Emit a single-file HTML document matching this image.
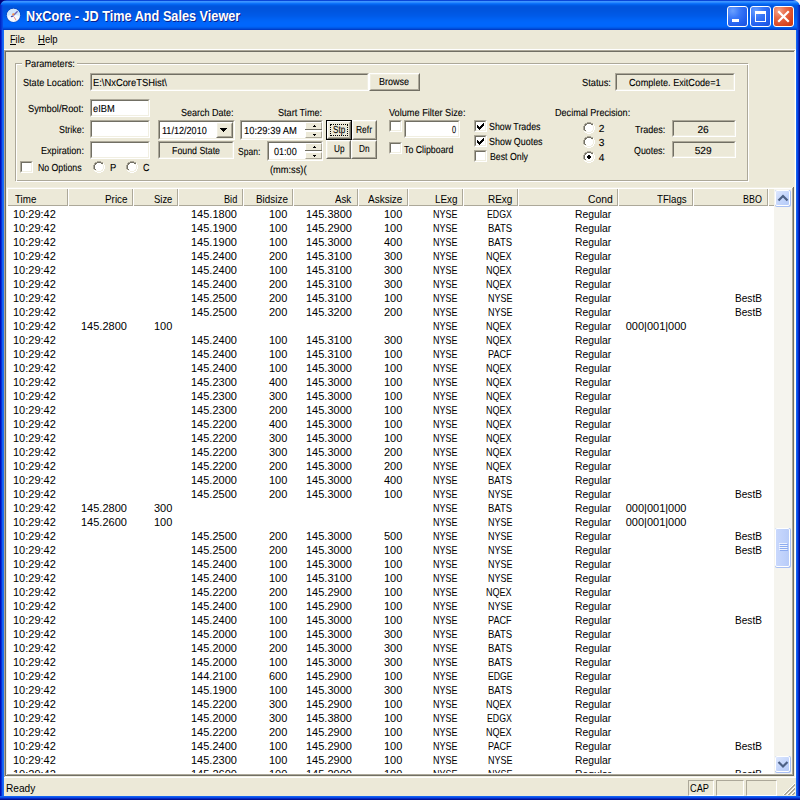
<!DOCTYPE html>
<html><head><meta charset="utf-8"><style>
html,body{margin:0;padding:0;width:800px;height:800px;overflow:hidden;background:#fff}
div{position:absolute;box-sizing:border-box}
.t{white-space:pre;font:11px/13px "Liberation Sans",sans-serif;color:#000;transform-origin:0 0}
.d{font-size:10.2px;text-rendering:geometricPrecision;-webkit-text-stroke:0.1px #000}
.tt{font:bold 14px/13px "Liberation Sans",sans-serif;text-shadow:1px 1px 0 #0a1e8c}
</style></head><body>
<div style="left:0;top:0;width:800px;height:800px;background:#0831d9"></div>
<div style="left:0;top:0;width:4px;height:800px;background:linear-gradient(90deg,#0010b8 0,#0010b8 1px,#0a2fd6 1px,#0a2fd6 2px,#1262f2 2px,#1262f2 3px,#1a6cf8 3px)"></div>
<div style="left:796px;top:0;width:4px;height:800px;background:linear-gradient(90deg,#1262f2 0,#1262f2 1px,#0a4ae6 1px,#0a4ae6 2px,#0428c4 2px,#0428c4 3px,#001090 3px)"></div>
<div style="left:0;top:796px;width:800px;height:4px;background:linear-gradient(180deg,#1262f2 0,#1262f2 1px,#0a4ae6 1px,#0a4ae6 2px,#0428c4 2px,#0428c4 3px,#001090 3px)"></div>
<div style="left:0px;top:0px;width:8px;height:8px;background:#00007a;"></div>
<div style="left:792px;top:0px;width:8px;height:8px;background:#f4f4f8;"></div>
<div style="left:0;top:0;width:800px;height:30px;border-radius:7px 7px 0 0;background:linear-gradient(180deg,#0a46d8 0px,#0a46d8 1px,#3d95ff 1px,#3d95ff 2px,#2a88ff 2px,#2a88ff 3px,#0d72fa 3px,#0d72fa 4px,#0364f0 4px,#0364f0 5px,#005ae4 5px,#005ae4 6px,#0055de 6px,#0055de 7px,#0054dd 7px,#0054dd 8px,#0054dd 8px,#0054dd 9px,#0055de 9px,#0055de 10px,#0055df 10px,#0055df 11px,#0056e0 11px,#0056e0 12px,#0057e2 12px,#0057e2 13px,#0058e4 13px,#0058e4 14px,#0059e6 14px,#0059e6 15px,#005ae8 15px,#005ae8 16px,#005cea 16px,#005cea 17px,#005eee 17px,#005eee 18px,#0060f1 18px,#0060f1 19px,#0062f4 19px,#0062f4 20px,#0064f7 20px,#0064f7 21px,#0065f9 21px,#0065f9 22px,#0066fb 22px,#0066fb 23px,#0066fc 23px,#0066fc 24px,#0066fc 24px,#0066fc 25px,#0066fc 25px,#0066fc 26px,#0064f8 26px,#0064f8 27px,#005cec 27px,#005cec 28px,#004fdc 28px,#004fdc 29px,#003dc8 29px,#003dc8 30px)"></div>
<div style="left:0;top:5px;width:3px;height:25px;background:linear-gradient(90deg,#0020c0,#0a50e8)"></div>
<div style="left:797px;top:5px;width:3px;height:25px;background:linear-gradient(90deg,#0a50e8,#0020b0)"></div>
<svg style="position:absolute;left:5px;top:7px" width="17" height="17" viewBox="0 0 17 17">
<circle cx="8.5" cy="8.3" r="7.2" fill="#1a3c9a" opacity="0.55"/>
<circle cx="8.5" cy="8.3" r="6.6" fill="#f4f9ff"/>
<path d="M1.9 8.3A6.6 6.6 0 0 1 15.1 8.3L15 9.2C12 7.5 5 7.5 2 9.2Z" fill="#cfe6fb"/>
<path d="M8.6 8.2L12.6 4.2" stroke="#6a64b8" stroke-width="1.3"/>
<path d="M8.6 8.9L5.9 9.6" stroke="#4646a8" stroke-width="1.4"/>
<path d="M9.3 10.2L11.1 13.4" stroke="#f29090" stroke-width="1"/>
<circle cx="8.3" cy="7.4" r="1.1" fill="#ff8a3a"/>
</svg>
<div class="t tt" style="left:25.60px;top:10px;transform:scaleX(0.907);color:#fff;">NxCore - JD Time And Sales Viewer</div>
<div style="left:727px;top:6px;width:21px;height:21px;border:1px solid #fff;border-radius:3px;background:radial-gradient(circle at 25% 20%,#6aa0ff 0,#3a78f8 35%,#2260ee 70%,#1a50dc 100%)"></div>
<div style="left:750px;top:6px;width:21px;height:21px;border:1px solid #fff;border-radius:3px;background:radial-gradient(circle at 25% 20%,#6aa0ff 0,#3a78f8 35%,#2260ee 70%,#1a50dc 100%)"></div>
<div style="left:773px;top:6px;width:21px;height:21px;border:1px solid #fff;border-radius:3px;background:radial-gradient(circle at 25% 20%,#f5a48a 0,#e86a48 35%,#d9441e 75%,#c83a10 100%)"></div>
<div style="left:732px;top:19px;width:7px;height:3px;background:#fff;"></div>
<div style="left:755px;top:11px;width:11px;height:11px;border:1px solid #fff;border-top-width:3px"></div>
<svg style="position:absolute;left:773px;top:6px" width="21" height="21"><path d="M6 6L15 15M15 6L6 15" stroke="#fff" stroke-width="2.2" stroke-linecap="square"/></svg>
<div style="left:4px;top:30px;width:792px;height:766px;background:#ece9d8;"></div>
<div class="t" style="left:10.00px;top:33px;transform:scaleX(0.833);">File</div>
<div style="left:10px;top:44px;width:6px;height:1px;background:#000;"></div>
<div class="t" style="left:38.00px;top:33px;transform:scaleX(0.870);">Help</div>
<div style="left:38px;top:44px;width:7px;height:1px;background:#000;"></div>
<div style="left:4px;top:49px;width:792px;height:1px;background:#ffffff;"></div>
<div style="left:4px;top:50px;width:791px;height:1px;background:#aca899;"></div>
<div style="left:4px;top:50px;width:1px;height:727px;background:#aca899;"></div>
<div style="left:5px;top:51px;width:789px;height:1px;background:#716f64;"></div>
<div style="left:5px;top:51px;width:1px;height:725px;background:#716f64;"></div>
<div style="left:795px;top:50px;width:1px;height:728px;background:#ffffff;"></div>
<div style="left:4px;top:777px;width:792px;height:1px;background:#ffffff;"></div>
<div style="left:794px;top:51px;width:1px;height:726px;background:#f1efe2;"></div>
<div style="left:5px;top:776px;width:790px;height:1px;background:#f1efe2;"></div>
<div style="left:15px;top:63px;width:733px;height:1px;background:#aca899;"></div>
<div style="left:15px;top:63px;width:1px;height:118px;background:#aca899;"></div>
<div style="left:747px;top:63px;width:1px;height:118px;background:#aca899;"></div>
<div style="left:15px;top:180px;width:733px;height:1px;background:#aca899;"></div>
<div style="left:16px;top:64px;width:733px;height:1px;background:#ffffff;"></div>
<div style="left:16px;top:64px;width:1px;height:118px;background:#ffffff;"></div>
<div style="left:748px;top:64px;width:1px;height:118px;background:#ffffff;"></div>
<div style="left:16px;top:181px;width:733px;height:1px;background:#ffffff;"></div>
<div style="left:22px;top:62px;width:55px;height:4px;background:#ece9d8;"></div>
<div class="t d" style="left:25.00px;top:58px;transform:scaleX(0.899);">Parameters:</div>
<div class="t d" style="left:22.50px;top:77px;transform:scaleX(0.894);">State Location:</div>
<div style="left:90px;top:73px;width:279px;height:18px;background:#ece9d8;box-sizing:border-box;border-top:1px solid #aca899;border-left:1px solid #aca899;border-bottom:1px solid #ffffff;border-right:1px solid #ffffff"><div style="left:0;top:0;right:0;bottom:0;border-top:1px solid #716f64;border-left:1px solid #716f64;border-bottom:1px solid #f1efe2;border-right:1px solid #f1efe2"></div></div>
<div class="t d" style="left:93.00px;top:77px;transform:scaleX(0.919);">E:\NxCoreTSHist\</div>
<div style="left:369px;top:73px;width:51px;height:18px;background:#ece9d8;box-sizing:border-box;border-top:1px solid #ffffff;border-left:1px solid #ffffff;border-bottom:1px solid #716f64;border-right:1px solid #716f64"><div style="left:0;top:0;right:0;bottom:0;border-top:1px solid #f1efe2;border-left:1px solid #f1efe2;border-bottom:1px solid #aca899;border-right:1px solid #aca899"></div></div>
<div class="t d" style="left:378.85px;top:76px;transform:scaleX(0.883);">Browse</div>
<div class="t d" style="left:581.70px;top:77px;transform:scaleX(0.910);">Status:</div>
<div style="left:615px;top:73px;width:120px;height:18px;background:#ece9d8;box-sizing:border-box;border-top:1px solid #aca899;border-left:1px solid #aca899;border-bottom:1px solid #ffffff;border-right:1px solid #ffffff"><div style="left:0;top:0;right:0;bottom:0;border-top:1px solid #716f64;border-left:1px solid #716f64;border-bottom:1px solid #f1efe2;border-right:1px solid #f1efe2"></div></div>
<div class="t d" style="left:628.80px;top:77px;transform:scaleX(0.896);">Complete. ExitCode=1</div>
<div class="t d" style="left:27.80px;top:103px;transform:scaleX(0.910);">Symbol/Root:</div>
<div style="left:90px;top:99px;width:60px;height:18px;background:#ffffff;box-sizing:border-box;border-top:1px solid #aca899;border-left:1px solid #aca899;border-bottom:1px solid #ffffff;border-right:1px solid #ffffff"><div style="left:0;top:0;right:0;bottom:0;border-top:1px solid #716f64;border-left:1px solid #716f64;border-bottom:1px solid #f1efe2;border-right:1px solid #f1efe2"></div></div>
<div class="t d" style="left:93.00px;top:103px;transform:scaleX(0.913);">eIBM</div>
<div class="t d" style="left:58.50px;top:124px;transform:scaleX(0.870);">Strike:</div>
<div style="left:90px;top:120px;width:60px;height:18px;background:#ffffff;box-sizing:border-box;border-top:1px solid #aca899;border-left:1px solid #aca899;border-bottom:1px solid #ffffff;border-right:1px solid #ffffff"><div style="left:0;top:0;right:0;bottom:0;border-top:1px solid #716f64;border-left:1px solid #716f64;border-bottom:1px solid #f1efe2;border-right:1px solid #f1efe2"></div></div>
<div class="t d" style="left:40.50px;top:145px;transform:scaleX(0.892);">Expiration:</div>
<div style="left:90px;top:141px;width:60px;height:18px;background:#ffffff;box-sizing:border-box;border-top:1px solid #aca899;border-left:1px solid #aca899;border-bottom:1px solid #ffffff;border-right:1px solid #ffffff"><div style="left:0;top:0;right:0;bottom:0;border-top:1px solid #716f64;border-left:1px solid #716f64;border-bottom:1px solid #f1efe2;border-right:1px solid #f1efe2"></div></div>
<div style="left:20px;top:161px;width:13px;height:12px;background:#ffffff;box-sizing:border-box;border-top:1px solid #aca899;border-left:1px solid #aca899;border-bottom:1px solid #ffffff;border-right:1px solid #ffffff"><div style="left:0;top:0;right:0;bottom:0;border-top:1px solid #716f64;border-left:1px solid #716f64;border-bottom:1px solid #f1efe2;border-right:1px solid #f1efe2"></div></div>
<div class="t d" style="left:38.00px;top:162px;transform:scaleX(0.855);">No Options</div>
<svg style="position:absolute;left:93px;top:161px" width="12" height="12" shape-rendering="crispEdges"><path fill="#aca899" d="M4 0h1v1h-1zM5 0h1v1h-1zM6 0h1v1h-1zM7 0h1v1h-1zM2 1h1v1h-1zM3 1h1v1h-1zM8 1h1v1h-1zM9 1h1v1h-1zM1 2h1v1h-1zM1 3h1v1h-1zM0 4h1v1h-1zM0 5h1v1h-1zM0 6h1v1h-1zM0 7h1v1h-1zM1 8h1v1h-1z"/><path fill="#716f64" d="M4 1h1v1h-1zM5 1h1v1h-1zM6 1h1v1h-1zM7 1h1v1h-1zM2 2h1v1h-1zM3 2h1v1h-1zM8 2h1v1h-1zM9 2h1v1h-1zM2 3h1v1h-1zM1 4h1v1h-1zM1 5h1v1h-1zM1 6h1v1h-1zM1 7h1v1h-1zM2 8h1v1h-1z"/><path fill="#ffffff" d="M4 2h1v1h-1zM5 2h1v1h-1zM6 2h1v1h-1zM7 2h1v1h-1zM10 2h1v1h-1zM3 3h1v1h-1zM4 3h1v1h-1zM5 3h1v1h-1zM6 3h1v1h-1zM7 3h1v1h-1zM8 3h1v1h-1zM10 3h1v1h-1zM2 4h1v1h-1zM3 4h1v1h-1zM4 4h1v1h-1zM5 4h1v1h-1zM6 4h1v1h-1zM7 4h1v1h-1zM8 4h1v1h-1zM9 4h1v1h-1zM11 4h1v1h-1zM2 5h1v1h-1zM3 5h1v1h-1zM4 5h1v1h-1zM5 5h1v1h-1zM6 5h1v1h-1zM7 5h1v1h-1zM8 5h1v1h-1zM9 5h1v1h-1zM11 5h1v1h-1zM2 6h1v1h-1zM3 6h1v1h-1zM4 6h1v1h-1zM5 6h1v1h-1zM6 6h1v1h-1zM7 6h1v1h-1zM8 6h1v1h-1zM9 6h1v1h-1zM11 6h1v1h-1zM2 7h1v1h-1zM3 7h1v1h-1zM4 7h1v1h-1zM5 7h1v1h-1zM6 7h1v1h-1zM7 7h1v1h-1zM8 7h1v1h-1zM9 7h1v1h-1zM11 7h1v1h-1zM3 8h1v1h-1zM4 8h1v1h-1zM5 8h1v1h-1zM6 8h1v1h-1zM7 8h1v1h-1zM8 8h1v1h-1zM10 8h1v1h-1zM1 9h1v1h-1zM4 9h1v1h-1zM5 9h1v1h-1zM6 9h1v1h-1zM7 9h1v1h-1zM10 9h1v1h-1zM2 10h1v1h-1zM3 10h1v1h-1zM8 10h1v1h-1zM9 10h1v1h-1zM4 11h1v1h-1zM5 11h1v1h-1zM6 11h1v1h-1zM7 11h1v1h-1z"/><path fill="#f1efe2" d="M9 3h1v1h-1zM10 4h1v1h-1zM10 5h1v1h-1zM10 6h1v1h-1zM10 7h1v1h-1zM9 8h1v1h-1zM2 9h1v1h-1zM3 9h1v1h-1zM8 9h1v1h-1zM9 9h1v1h-1zM4 10h1v1h-1zM5 10h1v1h-1zM6 10h1v1h-1zM7 10h1v1h-1z"/></svg>
<div class="t d" style="left:109.50px;top:162px;transform:scaleX(0.924);">P</div>
<svg style="position:absolute;left:126px;top:161px" width="12" height="12" shape-rendering="crispEdges"><path fill="#aca899" d="M4 0h1v1h-1zM5 0h1v1h-1zM6 0h1v1h-1zM7 0h1v1h-1zM2 1h1v1h-1zM3 1h1v1h-1zM8 1h1v1h-1zM9 1h1v1h-1zM1 2h1v1h-1zM1 3h1v1h-1zM0 4h1v1h-1zM0 5h1v1h-1zM0 6h1v1h-1zM0 7h1v1h-1zM1 8h1v1h-1z"/><path fill="#716f64" d="M4 1h1v1h-1zM5 1h1v1h-1zM6 1h1v1h-1zM7 1h1v1h-1zM2 2h1v1h-1zM3 2h1v1h-1zM8 2h1v1h-1zM9 2h1v1h-1zM2 3h1v1h-1zM1 4h1v1h-1zM1 5h1v1h-1zM1 6h1v1h-1zM1 7h1v1h-1zM2 8h1v1h-1z"/><path fill="#ffffff" d="M4 2h1v1h-1zM5 2h1v1h-1zM6 2h1v1h-1zM7 2h1v1h-1zM10 2h1v1h-1zM3 3h1v1h-1zM4 3h1v1h-1zM5 3h1v1h-1zM6 3h1v1h-1zM7 3h1v1h-1zM8 3h1v1h-1zM10 3h1v1h-1zM2 4h1v1h-1zM3 4h1v1h-1zM4 4h1v1h-1zM5 4h1v1h-1zM6 4h1v1h-1zM7 4h1v1h-1zM8 4h1v1h-1zM9 4h1v1h-1zM11 4h1v1h-1zM2 5h1v1h-1zM3 5h1v1h-1zM4 5h1v1h-1zM5 5h1v1h-1zM6 5h1v1h-1zM7 5h1v1h-1zM8 5h1v1h-1zM9 5h1v1h-1zM11 5h1v1h-1zM2 6h1v1h-1zM3 6h1v1h-1zM4 6h1v1h-1zM5 6h1v1h-1zM6 6h1v1h-1zM7 6h1v1h-1zM8 6h1v1h-1zM9 6h1v1h-1zM11 6h1v1h-1zM2 7h1v1h-1zM3 7h1v1h-1zM4 7h1v1h-1zM5 7h1v1h-1zM6 7h1v1h-1zM7 7h1v1h-1zM8 7h1v1h-1zM9 7h1v1h-1zM11 7h1v1h-1zM3 8h1v1h-1zM4 8h1v1h-1zM5 8h1v1h-1zM6 8h1v1h-1zM7 8h1v1h-1zM8 8h1v1h-1zM10 8h1v1h-1zM1 9h1v1h-1zM4 9h1v1h-1zM5 9h1v1h-1zM6 9h1v1h-1zM7 9h1v1h-1zM10 9h1v1h-1zM2 10h1v1h-1zM3 10h1v1h-1zM8 10h1v1h-1zM9 10h1v1h-1zM4 11h1v1h-1zM5 11h1v1h-1zM6 11h1v1h-1zM7 11h1v1h-1z"/><path fill="#f1efe2" d="M9 3h1v1h-1zM10 4h1v1h-1zM10 5h1v1h-1zM10 6h1v1h-1zM10 7h1v1h-1zM9 8h1v1h-1zM2 9h1v1h-1zM3 9h1v1h-1zM8 9h1v1h-1zM9 9h1v1h-1zM4 10h1v1h-1zM5 10h1v1h-1zM6 10h1v1h-1zM7 10h1v1h-1z"/></svg>
<div class="t d" style="left:143.00px;top:162px;transform:scaleX(0.876);">C</div>
<div class="t d" style="left:180.50px;top:107px;transform:scaleX(0.885);">Search Date:</div>
<div style="left:158px;top:120px;width:77px;height:20px;background:#ffffff;box-sizing:border-box;border-top:1px solid #aca899;border-left:1px solid #aca899;border-bottom:1px solid #ffffff;border-right:1px solid #ffffff"><div style="left:0;top:0;right:0;bottom:0;border-top:1px solid #716f64;border-left:1px solid #716f64;border-bottom:1px solid #f1efe2;border-right:1px solid #f1efe2"></div></div>
<div class="t d" style="left:162.30px;top:125px;transform:scaleX(0.891);">11/12/2010</div>
<div style="left:216px;top:122px;width:17px;height:16px;background:#ece9d8;box-sizing:border-box;border-top:1px solid #ffffff;border-left:1px solid #ffffff;border-bottom:1px solid #716f64;border-right:1px solid #716f64"><div style="left:0;top:0;right:0;bottom:0;border-top:1px solid #f1efe2;border-left:1px solid #f1efe2;border-bottom:1px solid #aca899;border-right:1px solid #aca899"></div></div>
<svg style="position:absolute;left:220px;top:128px" width="7" height="4" shape-rendering="crispEdges"><path d="M0 0h7v1h-1v1h-1v1h-1v1h-1v-1h-1v-1h-1v-1h-1z" fill="#000"/></svg>
<div style="left:158px;top:141px;width:76px;height:18px;background:#ece9d8;box-sizing:border-box;border-top:1px solid #aca899;border-left:1px solid #aca899;border-bottom:1px solid #ffffff;border-right:1px solid #ffffff"><div style="left:0;top:0;right:0;bottom:0;border-top:1px solid #716f64;border-left:1px solid #716f64;border-bottom:1px solid #f1efe2;border-right:1px solid #f1efe2"></div></div>
<div class="t d" style="left:171.95px;top:145px;transform:scaleX(0.865);">Found State</div>
<div class="t d" style="left:277.50px;top:107px;transform:scaleX(0.895);">Start Time:</div>
<div style="left:240px;top:120px;width:83px;height:20px;background:#ffffff;box-sizing:border-box;border-top:1px solid #aca899;border-left:1px solid #aca899;border-bottom:1px solid #ffffff;border-right:1px solid #ffffff"><div style="left:0;top:0;right:0;bottom:0;border-top:1px solid #716f64;border-left:1px solid #716f64;border-bottom:1px solid #f1efe2;border-right:1px solid #f1efe2"></div></div>
<div class="t d" style="left:244.40px;top:125px;transform:scaleX(0.924);">10:29:39 AM</div>
<div style="left:305px;top:122px;width:17px;height:8px;background:#ece9d8;border-top:1px solid #ffffff;border-left:1px solid #ffffff;border-bottom:1px solid #aca899;border-right:1px solid #aca899"></div>
<div style="left:305px;top:131px;width:17px;height:7px;background:#ece9d8;border-top:1px solid #ffffff;border-left:1px solid #ffffff;border-bottom:1px solid #aca899;border-right:1px solid #aca899"></div>
<div style="left:305px;top:129px;width:17px;height:1px;background:#716f64;"></div>
<svg style="position:absolute;left:313px;top:125px" width="3" height="2" shape-rendering="crispEdges"><path d="M1 0h1v1h1v1h-3v-1h1z" fill="#000"/></svg>
<svg style="position:absolute;left:313px;top:134px" width="3" height="2" shape-rendering="crispEdges"><path d="M0 0h3v1h-1v1h-1v-1h-1z" fill="#000"/></svg>
<div class="t d" style="left:237.50px;top:146px;transform:scaleX(0.837);">Span:</div>
<div style="left:267px;top:141px;width:56px;height:20px;background:#ffffff;box-sizing:border-box;border-top:1px solid #aca899;border-left:1px solid #aca899;border-bottom:1px solid #ffffff;border-right:1px solid #ffffff"><div style="left:0;top:0;right:0;bottom:0;border-top:1px solid #716f64;border-left:1px solid #716f64;border-bottom:1px solid #f1efe2;border-right:1px solid #f1efe2"></div></div>
<div class="t d" style="left:274.40px;top:146px;transform:scaleX(0.890);">01:00</div>
<div style="left:305px;top:143px;width:17px;height:8px;background:#ece9d8;border-top:1px solid #ffffff;border-left:1px solid #ffffff;border-bottom:1px solid #aca899;border-right:1px solid #aca899"></div>
<div style="left:305px;top:152px;width:17px;height:7px;background:#ece9d8;border-top:1px solid #ffffff;border-left:1px solid #ffffff;border-bottom:1px solid #aca899;border-right:1px solid #aca899"></div>
<div style="left:305px;top:150px;width:17px;height:1px;background:#716f64;"></div>
<svg style="position:absolute;left:313px;top:146px" width="3" height="2" shape-rendering="crispEdges"><path d="M1 0h1v1h1v1h-3v-1h1z" fill="#000"/></svg>
<svg style="position:absolute;left:313px;top:155px" width="3" height="2" shape-rendering="crispEdges"><path d="M0 0h3v1h-1v1h-1v-1h-1z" fill="#000"/></svg>
<div class="t d" style="left:269.80px;top:164px;transform:scaleX(0.909);">(mm:ss)(</div>
<div style="left:352px;top:120px;width:25px;height:20px;background:#ece9d8;box-sizing:border-box;border-top:1px solid #ffffff;border-left:1px solid #ffffff;border-bottom:1px solid #716f64;border-right:1px solid #716f64"><div style="left:0;top:0;right:0;bottom:0;border-top:1px solid #f1efe2;border-left:1px solid #f1efe2;border-bottom:1px solid #aca899;border-right:1px solid #aca899"></div></div>
<div class="t d" style="left:355.90px;top:124px;transform:scaleX(0.832);">Refr</div>
<div style="left:326px;top:140px;width:25px;height:19px;background:#ece9d8;box-sizing:border-box;border-top:1px solid #ffffff;border-left:1px solid #ffffff;border-bottom:1px solid #716f64;border-right:1px solid #716f64"><div style="left:0;top:0;right:0;bottom:0;border-top:1px solid #f1efe2;border-left:1px solid #f1efe2;border-bottom:1px solid #aca899;border-right:1px solid #aca899"></div></div>
<div class="t d" style="left:333.55px;top:143px;transform:scaleX(0.809);">Up</div>
<div style="left:351px;top:140px;width:26px;height:19px;background:#ece9d8;box-sizing:border-box;border-top:1px solid #ffffff;border-left:1px solid #ffffff;border-bottom:1px solid #716f64;border-right:1px solid #716f64"><div style="left:0;top:0;right:0;bottom:0;border-top:1px solid #f1efe2;border-left:1px solid #f1efe2;border-bottom:1px solid #aca899;border-right:1px solid #aca899"></div></div>
<div class="t d" style="left:358.55px;top:143px;transform:scaleX(0.809);">Dn</div>
<div style="left:326px;top:120px;width:26px;height:20px;border:1px solid #000"></div>
<div style="left:327px;top:121px;width:24px;height:18px;background:#ece9d8;box-sizing:border-box;border-top:1px solid #ffffff;border-left:1px solid #ffffff;border-bottom:1px solid #716f64;border-right:1px solid #716f64"><div style="left:0;top:0;right:0;bottom:0;border-top:1px solid #f1efe2;border-left:1px solid #f1efe2;border-bottom:1px solid #aca899;border-right:1px solid #aca899"></div></div>
<div style="left:330px;top:124px;width:18px;height:12px;border:1px dotted #000"></div>
<div class="t d" style="left:332.55px;top:124px;transform:scaleX(0.793);">Stp</div>
<div class="t d" style="left:389.40px;top:107px;transform:scaleX(0.901);">Volume Filter Size:</div>
<div style="left:389px;top:120px;width:13px;height:12px;background:#ffffff;box-sizing:border-box;border-top:1px solid #aca899;border-left:1px solid #aca899;border-bottom:1px solid #ffffff;border-right:1px solid #ffffff"><div style="left:0;top:0;right:0;bottom:0;border-top:1px solid #716f64;border-left:1px solid #716f64;border-bottom:1px solid #f1efe2;border-right:1px solid #f1efe2"></div></div>
<div style="left:404px;top:120px;width:56px;height:18px;background:#ffffff;box-sizing:border-box;border-top:1px solid #aca899;border-left:1px solid #aca899;border-bottom:1px solid #ffffff;border-right:1px solid #ffffff"><div style="left:0;top:0;right:0;bottom:0;border-top:1px solid #716f64;border-left:1px solid #716f64;border-bottom:1px solid #f1efe2;border-right:1px solid #f1efe2"></div></div>
<div class="t d" style="left:452.00px;top:124px;transform:scaleX(0.719);">0</div>
<div style="left:389px;top:142px;width:13px;height:12px;background:#ffffff;box-sizing:border-box;border-top:1px solid #aca899;border-left:1px solid #aca899;border-bottom:1px solid #ffffff;border-right:1px solid #ffffff"><div style="left:0;top:0;right:0;bottom:0;border-top:1px solid #716f64;border-left:1px solid #716f64;border-bottom:1px solid #f1efe2;border-right:1px solid #f1efe2"></div></div>
<div class="t d" style="left:404.40px;top:144px;transform:scaleX(0.863);">To Clipboard</div>
<div style="left:474px;top:120px;width:13px;height:12px;background:#ffffff;box-sizing:border-box;border-top:1px solid #aca899;border-left:1px solid #aca899;border-bottom:1px solid #ffffff;border-right:1px solid #ffffff"><div style="left:0;top:0;right:0;bottom:0;border-top:1px solid #716f64;border-left:1px solid #716f64;border-bottom:1px solid #f1efe2;border-right:1px solid #f1efe2"></div></div>
<svg style="position:absolute;left:474px;top:120px" width="13" height="12" shape-rendering="crispEdges"><path fill="#000" d="M9 3h1v1h-1zM8 4h1v1h-1zM9 4h1v1h-1zM3 5h1v1h-1zM7 5h1v1h-1zM8 5h1v1h-1zM9 5h1v1h-1zM3 6h1v1h-1zM4 6h1v1h-1zM6 6h1v1h-1zM7 6h1v1h-1zM8 6h1v1h-1zM3 7h1v1h-1zM4 7h1v1h-1zM5 7h1v1h-1zM6 7h1v1h-1zM7 7h1v1h-1zM4 8h1v1h-1zM5 8h1v1h-1zM6 8h1v1h-1zM5 9h1v1h-1z"/></svg>
<div class="t d" style="left:488.80px;top:121px;transform:scaleX(0.866);">Show Trades</div>
<div style="left:474px;top:135px;width:13px;height:12px;background:#ffffff;box-sizing:border-box;border-top:1px solid #aca899;border-left:1px solid #aca899;border-bottom:1px solid #ffffff;border-right:1px solid #ffffff"><div style="left:0;top:0;right:0;bottom:0;border-top:1px solid #716f64;border-left:1px solid #716f64;border-bottom:1px solid #f1efe2;border-right:1px solid #f1efe2"></div></div>
<svg style="position:absolute;left:474px;top:135px" width="13" height="12" shape-rendering="crispEdges"><path fill="#000" d="M9 3h1v1h-1zM8 4h1v1h-1zM9 4h1v1h-1zM3 5h1v1h-1zM7 5h1v1h-1zM8 5h1v1h-1zM9 5h1v1h-1zM3 6h1v1h-1zM4 6h1v1h-1zM6 6h1v1h-1zM7 6h1v1h-1zM8 6h1v1h-1zM3 7h1v1h-1zM4 7h1v1h-1zM5 7h1v1h-1zM6 7h1v1h-1zM7 7h1v1h-1zM4 8h1v1h-1zM5 8h1v1h-1zM6 8h1v1h-1zM5 9h1v1h-1z"/></svg>
<div class="t d" style="left:488.80px;top:136px;transform:scaleX(0.876);">Show Quotes</div>
<div style="left:474px;top:150px;width:13px;height:12px;background:#ffffff;box-sizing:border-box;border-top:1px solid #aca899;border-left:1px solid #aca899;border-bottom:1px solid #ffffff;border-right:1px solid #ffffff"><div style="left:0;top:0;right:0;bottom:0;border-top:1px solid #716f64;border-left:1px solid #716f64;border-bottom:1px solid #f1efe2;border-right:1px solid #f1efe2"></div></div>
<div class="t d" style="left:489.80px;top:151px;transform:scaleX(0.860);">Best Only</div>
<div class="t d" style="left:554.80px;top:107px;transform:scaleX(0.891);">Decimal Precision:</div>
<svg style="position:absolute;left:583px;top:122px" width="12" height="12" shape-rendering="crispEdges"><path fill="#aca899" d="M4 0h1v1h-1zM5 0h1v1h-1zM6 0h1v1h-1zM7 0h1v1h-1zM2 1h1v1h-1zM3 1h1v1h-1zM8 1h1v1h-1zM9 1h1v1h-1zM1 2h1v1h-1zM1 3h1v1h-1zM0 4h1v1h-1zM0 5h1v1h-1zM0 6h1v1h-1zM0 7h1v1h-1zM1 8h1v1h-1z"/><path fill="#716f64" d="M4 1h1v1h-1zM5 1h1v1h-1zM6 1h1v1h-1zM7 1h1v1h-1zM2 2h1v1h-1zM3 2h1v1h-1zM8 2h1v1h-1zM9 2h1v1h-1zM2 3h1v1h-1zM1 4h1v1h-1zM1 5h1v1h-1zM1 6h1v1h-1zM1 7h1v1h-1zM2 8h1v1h-1z"/><path fill="#ffffff" d="M4 2h1v1h-1zM5 2h1v1h-1zM6 2h1v1h-1zM7 2h1v1h-1zM10 2h1v1h-1zM3 3h1v1h-1zM4 3h1v1h-1zM5 3h1v1h-1zM6 3h1v1h-1zM7 3h1v1h-1zM8 3h1v1h-1zM10 3h1v1h-1zM2 4h1v1h-1zM3 4h1v1h-1zM4 4h1v1h-1zM5 4h1v1h-1zM6 4h1v1h-1zM7 4h1v1h-1zM8 4h1v1h-1zM9 4h1v1h-1zM11 4h1v1h-1zM2 5h1v1h-1zM3 5h1v1h-1zM4 5h1v1h-1zM5 5h1v1h-1zM6 5h1v1h-1zM7 5h1v1h-1zM8 5h1v1h-1zM9 5h1v1h-1zM11 5h1v1h-1zM2 6h1v1h-1zM3 6h1v1h-1zM4 6h1v1h-1zM5 6h1v1h-1zM6 6h1v1h-1zM7 6h1v1h-1zM8 6h1v1h-1zM9 6h1v1h-1zM11 6h1v1h-1zM2 7h1v1h-1zM3 7h1v1h-1zM4 7h1v1h-1zM5 7h1v1h-1zM6 7h1v1h-1zM7 7h1v1h-1zM8 7h1v1h-1zM9 7h1v1h-1zM11 7h1v1h-1zM3 8h1v1h-1zM4 8h1v1h-1zM5 8h1v1h-1zM6 8h1v1h-1zM7 8h1v1h-1zM8 8h1v1h-1zM10 8h1v1h-1zM1 9h1v1h-1zM4 9h1v1h-1zM5 9h1v1h-1zM6 9h1v1h-1zM7 9h1v1h-1zM10 9h1v1h-1zM2 10h1v1h-1zM3 10h1v1h-1zM8 10h1v1h-1zM9 10h1v1h-1zM4 11h1v1h-1zM5 11h1v1h-1zM6 11h1v1h-1zM7 11h1v1h-1z"/><path fill="#f1efe2" d="M9 3h1v1h-1zM10 4h1v1h-1zM10 5h1v1h-1zM10 6h1v1h-1zM10 7h1v1h-1zM9 8h1v1h-1zM2 9h1v1h-1zM3 9h1v1h-1zM8 9h1v1h-1zM9 9h1v1h-1zM4 10h1v1h-1zM5 10h1v1h-1zM6 10h1v1h-1zM7 10h1v1h-1z"/></svg>
<div class="t d" style="left:598.80px;top:123px;">2</div>
<svg style="position:absolute;left:583px;top:136px" width="12" height="12" shape-rendering="crispEdges"><path fill="#aca899" d="M4 0h1v1h-1zM5 0h1v1h-1zM6 0h1v1h-1zM7 0h1v1h-1zM2 1h1v1h-1zM3 1h1v1h-1zM8 1h1v1h-1zM9 1h1v1h-1zM1 2h1v1h-1zM1 3h1v1h-1zM0 4h1v1h-1zM0 5h1v1h-1zM0 6h1v1h-1zM0 7h1v1h-1zM1 8h1v1h-1z"/><path fill="#716f64" d="M4 1h1v1h-1zM5 1h1v1h-1zM6 1h1v1h-1zM7 1h1v1h-1zM2 2h1v1h-1zM3 2h1v1h-1zM8 2h1v1h-1zM9 2h1v1h-1zM2 3h1v1h-1zM1 4h1v1h-1zM1 5h1v1h-1zM1 6h1v1h-1zM1 7h1v1h-1zM2 8h1v1h-1z"/><path fill="#ffffff" d="M4 2h1v1h-1zM5 2h1v1h-1zM6 2h1v1h-1zM7 2h1v1h-1zM10 2h1v1h-1zM3 3h1v1h-1zM4 3h1v1h-1zM5 3h1v1h-1zM6 3h1v1h-1zM7 3h1v1h-1zM8 3h1v1h-1zM10 3h1v1h-1zM2 4h1v1h-1zM3 4h1v1h-1zM4 4h1v1h-1zM5 4h1v1h-1zM6 4h1v1h-1zM7 4h1v1h-1zM8 4h1v1h-1zM9 4h1v1h-1zM11 4h1v1h-1zM2 5h1v1h-1zM3 5h1v1h-1zM4 5h1v1h-1zM5 5h1v1h-1zM6 5h1v1h-1zM7 5h1v1h-1zM8 5h1v1h-1zM9 5h1v1h-1zM11 5h1v1h-1zM2 6h1v1h-1zM3 6h1v1h-1zM4 6h1v1h-1zM5 6h1v1h-1zM6 6h1v1h-1zM7 6h1v1h-1zM8 6h1v1h-1zM9 6h1v1h-1zM11 6h1v1h-1zM2 7h1v1h-1zM3 7h1v1h-1zM4 7h1v1h-1zM5 7h1v1h-1zM6 7h1v1h-1zM7 7h1v1h-1zM8 7h1v1h-1zM9 7h1v1h-1zM11 7h1v1h-1zM3 8h1v1h-1zM4 8h1v1h-1zM5 8h1v1h-1zM6 8h1v1h-1zM7 8h1v1h-1zM8 8h1v1h-1zM10 8h1v1h-1zM1 9h1v1h-1zM4 9h1v1h-1zM5 9h1v1h-1zM6 9h1v1h-1zM7 9h1v1h-1zM10 9h1v1h-1zM2 10h1v1h-1zM3 10h1v1h-1zM8 10h1v1h-1zM9 10h1v1h-1zM4 11h1v1h-1zM5 11h1v1h-1zM6 11h1v1h-1zM7 11h1v1h-1z"/><path fill="#f1efe2" d="M9 3h1v1h-1zM10 4h1v1h-1zM10 5h1v1h-1zM10 6h1v1h-1zM10 7h1v1h-1zM9 8h1v1h-1zM2 9h1v1h-1zM3 9h1v1h-1zM8 9h1v1h-1zM9 9h1v1h-1zM4 10h1v1h-1zM5 10h1v1h-1zM6 10h1v1h-1zM7 10h1v1h-1z"/></svg>
<div class="t d" style="left:598.80px;top:137px;">3</div>
<svg style="position:absolute;left:583px;top:151px" width="12" height="12" shape-rendering="crispEdges"><path fill="#aca899" d="M4 0h1v1h-1zM5 0h1v1h-1zM6 0h1v1h-1zM7 0h1v1h-1zM2 1h1v1h-1zM3 1h1v1h-1zM8 1h1v1h-1zM9 1h1v1h-1zM1 2h1v1h-1zM1 3h1v1h-1zM0 4h1v1h-1zM0 5h1v1h-1zM0 6h1v1h-1zM0 7h1v1h-1zM1 8h1v1h-1z"/><path fill="#716f64" d="M4 1h1v1h-1zM5 1h1v1h-1zM6 1h1v1h-1zM7 1h1v1h-1zM2 2h1v1h-1zM3 2h1v1h-1zM8 2h1v1h-1zM9 2h1v1h-1zM2 3h1v1h-1zM1 4h1v1h-1zM1 5h1v1h-1zM1 6h1v1h-1zM1 7h1v1h-1zM2 8h1v1h-1z"/><path fill="#ffffff" d="M4 2h1v1h-1zM5 2h1v1h-1zM6 2h1v1h-1zM7 2h1v1h-1zM10 2h1v1h-1zM3 3h1v1h-1zM4 3h1v1h-1zM5 3h1v1h-1zM6 3h1v1h-1zM7 3h1v1h-1zM8 3h1v1h-1zM10 3h1v1h-1zM2 4h1v1h-1zM3 4h1v1h-1zM4 4h1v1h-1zM5 4h1v1h-1zM6 4h1v1h-1zM7 4h1v1h-1zM8 4h1v1h-1zM9 4h1v1h-1zM11 4h1v1h-1zM2 5h1v1h-1zM3 5h1v1h-1zM4 5h1v1h-1zM5 5h1v1h-1zM6 5h1v1h-1zM7 5h1v1h-1zM8 5h1v1h-1zM9 5h1v1h-1zM11 5h1v1h-1zM2 6h1v1h-1zM3 6h1v1h-1zM4 6h1v1h-1zM5 6h1v1h-1zM6 6h1v1h-1zM7 6h1v1h-1zM8 6h1v1h-1zM9 6h1v1h-1zM11 6h1v1h-1zM2 7h1v1h-1zM3 7h1v1h-1zM4 7h1v1h-1zM5 7h1v1h-1zM6 7h1v1h-1zM7 7h1v1h-1zM8 7h1v1h-1zM9 7h1v1h-1zM11 7h1v1h-1zM3 8h1v1h-1zM4 8h1v1h-1zM5 8h1v1h-1zM6 8h1v1h-1zM7 8h1v1h-1zM8 8h1v1h-1zM10 8h1v1h-1zM1 9h1v1h-1zM4 9h1v1h-1zM5 9h1v1h-1zM6 9h1v1h-1zM7 9h1v1h-1zM10 9h1v1h-1zM2 10h1v1h-1zM3 10h1v1h-1zM8 10h1v1h-1zM9 10h1v1h-1zM4 11h1v1h-1zM5 11h1v1h-1zM6 11h1v1h-1zM7 11h1v1h-1z"/><path fill="#f1efe2" d="M9 3h1v1h-1zM10 4h1v1h-1zM10 5h1v1h-1zM10 6h1v1h-1zM10 7h1v1h-1zM9 8h1v1h-1zM2 9h1v1h-1zM3 9h1v1h-1zM8 9h1v1h-1zM9 9h1v1h-1zM4 10h1v1h-1zM5 10h1v1h-1zM6 10h1v1h-1zM7 10h1v1h-1z"/><path fill="#000" d="M5 4h1v1h-1zM6 4h1v1h-1zM4 5h1v1h-1zM5 5h1v1h-1zM6 5h1v1h-1zM7 5h1v1h-1zM4 6h1v1h-1zM5 6h1v1h-1zM6 6h1v1h-1zM7 6h1v1h-1zM5 7h1v1h-1zM6 7h1v1h-1z"/></svg>
<div class="t d" style="left:598.80px;top:152px;">4</div>
<div class="t d" style="left:634.80px;top:124px;transform:scaleX(0.886);">Trades:</div>
<div style="left:672px;top:120px;width:64px;height:17px;background:#ece9d8;box-sizing:border-box;border-top:1px solid #aca899;border-left:1px solid #aca899;border-bottom:1px solid #ffffff;border-right:1px solid #ffffff"><div style="left:0;top:0;right:0;bottom:0;border-top:1px solid #716f64;border-left:1px solid #716f64;border-bottom:1px solid #f1efe2;border-right:1px solid #f1efe2"></div></div>
<div class="t d" style="left:697.44px;top:124px;">26</div>
<div class="t d" style="left:633.80px;top:145px;transform:scaleX(0.868);">Quotes:</div>
<div style="left:672px;top:141px;width:64px;height:17px;background:#ece9d8;box-sizing:border-box;border-top:1px solid #aca899;border-left:1px solid #aca899;border-bottom:1px solid #ffffff;border-right:1px solid #ffffff"><div style="left:0;top:0;right:0;bottom:0;border-top:1px solid #716f64;border-left:1px solid #716f64;border-bottom:1px solid #f1efe2;border-right:1px solid #f1efe2"></div></div>
<div class="t d" style="left:694.65px;top:145px;">529</div>
<div style="left:6px;top:187px;width:788px;height:1px;background:#f1efe2;"></div>
<div style="left:6px;top:187px;width:1px;height:589px;background:#f1efe2;"></div>
<div style="left:7px;top:188px;width:786px;height:1px;background:#ffffff;"></div>
<div style="left:7px;top:188px;width:1px;height:587px;background:#ffffff;"></div>
<div style="left:792px;top:188px;width:1px;height:587px;background:#aca899;"></div>
<div style="left:7px;top:774px;width:786px;height:1px;background:#aca899;"></div>
<div style="left:793px;top:187px;width:1px;height:589px;background:#716f64;"></div>
<div style="left:6px;top:775px;width:788px;height:1px;background:#716f64;"></div>
<div style="left:8px;top:189px;width:784px;height:585px;background:#ffffff;"></div>
<div style="left:8px;top:189px;width:766px;height:17px;background:#ece9d8;"></div>
<div style="left:8px;top:205px;width:766px;height:1px;background:#aca899;"></div>
<div style="left:67px;top:189px;width:1px;height:17px;background:#aca899;"></div>
<div style="left:68px;top:189px;width:1px;height:17px;background:#ffffff;"></div>
<div class="t" style="left:15.00px;top:193px;transform:scaleX(0.888);">Time</div>
<div style="left:132px;top:189px;width:1px;height:17px;background:#aca899;"></div>
<div style="left:133px;top:189px;width:1px;height:17px;background:#ffffff;"></div>
<div class="t" style="left:104.50px;top:193px;transform:scaleX(0.900);">Price</div>
<div style="left:177px;top:189px;width:1px;height:17px;background:#aca899;"></div>
<div style="left:178px;top:189px;width:1px;height:17px;background:#ffffff;"></div>
<div class="t" style="left:154.00px;top:193px;transform:scaleX(0.857);">Size</div>
<div style="left:242px;top:189px;width:1px;height:17px;background:#aca899;"></div>
<div style="left:243px;top:189px;width:1px;height:17px;background:#ffffff;"></div>
<div class="t" style="left:223.70px;top:193px;transform:scaleX(0.831);">Bid</div>
<div style="left:292px;top:189px;width:1px;height:17px;background:#aca899;"></div>
<div style="left:293px;top:189px;width:1px;height:17px;background:#ffffff;"></div>
<div class="t" style="left:255.50px;top:193px;transform:scaleX(0.900);">Bidsize</div>
<div style="left:357px;top:189px;width:1px;height:17px;background:#aca899;"></div>
<div style="left:358px;top:189px;width:1px;height:17px;background:#ffffff;"></div>
<div class="t" style="left:335.20px;top:193px;transform:scaleX(0.884);">Ask</div>
<div style="left:407px;top:189px;width:1px;height:17px;background:#aca899;"></div>
<div style="left:408px;top:189px;width:1px;height:17px;background:#ffffff;"></div>
<div class="t" style="left:367.50px;top:193px;transform:scaleX(0.908);">Asksize</div>
<div style="left:462px;top:189px;width:1px;height:17px;background:#aca899;"></div>
<div style="left:463px;top:189px;width:1px;height:17px;background:#ffffff;"></div>
<div class="t" style="left:434.50px;top:193px;transform:scaleX(0.900);">LExg</div>
<div style="left:517px;top:189px;width:1px;height:17px;background:#aca899;"></div>
<div style="left:518px;top:189px;width:1px;height:17px;background:#ffffff;"></div>
<div class="t" style="left:487.50px;top:193px;transform:scaleX(0.907);">RExg</div>
<div style="left:617px;top:189px;width:1px;height:17px;background:#aca899;"></div>
<div style="left:618px;top:189px;width:1px;height:17px;background:#ffffff;"></div>
<div class="t" style="left:587.50px;top:193px;transform:scaleX(0.942);">Cond</div>
<div style="left:692px;top:189px;width:1px;height:17px;background:#aca899;"></div>
<div style="left:693px;top:189px;width:1px;height:17px;background:#ffffff;"></div>
<div class="t" style="left:657.00px;top:193px;transform:scaleX(0.882);">TFlags</div>
<div style="left:767px;top:189px;width:1px;height:17px;background:#aca899;"></div>
<div style="left:768px;top:189px;width:1px;height:17px;background:#ffffff;"></div>
<div class="t" style="left:742.50px;top:193px;transform:scaleX(0.812);">BBO</div>
<div style="left:8px;top:206px;width:767px;height:567px;overflow:hidden">
<div class="t" style="left:5.00px;top:2px;">10:29:42</div>
<div class="t" style="left:183.00px;top:2px;">145.1800</div>
<div class="t" style="left:261.00px;top:2px;">100</div>
<div class="t" style="left:298.00px;top:2px;">145.3800</div>
<div class="t" style="left:376.00px;top:2px;">100</div>
<div class="t" style="left:424.50px;top:2px;transform:scaleX(0.817);">NYSE</div>
<div class="t" style="left:478.50px;top:2px;transform:scaleX(0.797);">EDGX</div>
<div class="t" style="left:567.40px;top:2px;transform:scaleX(0.938);">Regular</div>
<div class="t" style="left:5.00px;top:16px;">10:29:42</div>
<div class="t" style="left:183.00px;top:16px;">145.1900</div>
<div class="t" style="left:261.00px;top:16px;">100</div>
<div class="t" style="left:298.00px;top:16px;">145.2900</div>
<div class="t" style="left:376.00px;top:16px;">100</div>
<div class="t" style="left:424.50px;top:16px;transform:scaleX(0.817);">NYSE</div>
<div class="t" style="left:479.70px;top:16px;transform:scaleX(0.868);">BATS</div>
<div class="t" style="left:567.40px;top:16px;transform:scaleX(0.938);">Regular</div>
<div class="t" style="left:5.00px;top:30px;">10:29:42</div>
<div class="t" style="left:183.00px;top:30px;">145.1900</div>
<div class="t" style="left:261.00px;top:30px;">100</div>
<div class="t" style="left:298.00px;top:30px;">145.3000</div>
<div class="t" style="left:376.00px;top:30px;">400</div>
<div class="t" style="left:424.50px;top:30px;transform:scaleX(0.817);">NYSE</div>
<div class="t" style="left:479.70px;top:30px;transform:scaleX(0.868);">BATS</div>
<div class="t" style="left:567.40px;top:30px;transform:scaleX(0.938);">Regular</div>
<div class="t" style="left:5.00px;top:44px;">10:29:42</div>
<div class="t" style="left:183.00px;top:44px;">145.2400</div>
<div class="t" style="left:261.00px;top:44px;">200</div>
<div class="t" style="left:298.00px;top:44px;">145.3100</div>
<div class="t" style="left:376.00px;top:44px;">300</div>
<div class="t" style="left:424.50px;top:44px;transform:scaleX(0.817);">NYSE</div>
<div class="t" style="left:477.70px;top:44px;transform:scaleX(0.822);">NQEX</div>
<div class="t" style="left:567.40px;top:44px;transform:scaleX(0.938);">Regular</div>
<div class="t" style="left:5.00px;top:58px;">10:29:42</div>
<div class="t" style="left:183.00px;top:58px;">145.2400</div>
<div class="t" style="left:261.00px;top:58px;">100</div>
<div class="t" style="left:298.00px;top:58px;">145.3100</div>
<div class="t" style="left:376.00px;top:58px;">300</div>
<div class="t" style="left:424.50px;top:58px;transform:scaleX(0.817);">NYSE</div>
<div class="t" style="left:477.70px;top:58px;transform:scaleX(0.822);">NQEX</div>
<div class="t" style="left:567.40px;top:58px;transform:scaleX(0.938);">Regular</div>
<div class="t" style="left:5.00px;top:72px;">10:29:42</div>
<div class="t" style="left:183.00px;top:72px;">145.2400</div>
<div class="t" style="left:261.00px;top:72px;">200</div>
<div class="t" style="left:298.00px;top:72px;">145.3100</div>
<div class="t" style="left:376.00px;top:72px;">300</div>
<div class="t" style="left:424.50px;top:72px;transform:scaleX(0.817);">NYSE</div>
<div class="t" style="left:477.70px;top:72px;transform:scaleX(0.822);">NQEX</div>
<div class="t" style="left:567.40px;top:72px;transform:scaleX(0.938);">Regular</div>
<div class="t" style="left:5.00px;top:86px;">10:29:42</div>
<div class="t" style="left:183.00px;top:86px;">145.2500</div>
<div class="t" style="left:261.00px;top:86px;">200</div>
<div class="t" style="left:298.00px;top:86px;">145.3100</div>
<div class="t" style="left:376.00px;top:86px;">100</div>
<div class="t" style="left:424.50px;top:86px;transform:scaleX(0.817);">NYSE</div>
<div class="t" style="left:479.50px;top:86px;transform:scaleX(0.817);">NYSE</div>
<div class="t" style="left:567.40px;top:86px;transform:scaleX(0.938);">Regular</div>
<div class="t" style="left:727.40px;top:86px;transform:scaleX(0.917);">BestB</div>
<div class="t" style="left:5.00px;top:100px;">10:29:42</div>
<div class="t" style="left:183.00px;top:100px;">145.2500</div>
<div class="t" style="left:261.00px;top:100px;">200</div>
<div class="t" style="left:298.00px;top:100px;">145.3200</div>
<div class="t" style="left:376.00px;top:100px;">200</div>
<div class="t" style="left:424.50px;top:100px;transform:scaleX(0.817);">NYSE</div>
<div class="t" style="left:479.50px;top:100px;transform:scaleX(0.817);">NYSE</div>
<div class="t" style="left:567.40px;top:100px;transform:scaleX(0.938);">Regular</div>
<div class="t" style="left:727.40px;top:100px;transform:scaleX(0.917);">BestB</div>
<div class="t" style="left:5.00px;top:114px;">10:29:42</div>
<div class="t" style="left:73.00px;top:114px;">145.2800</div>
<div class="t" style="left:146.00px;top:114px;">100</div>
<div class="t" style="left:424.50px;top:114px;transform:scaleX(0.817);">NYSE</div>
<div class="t" style="left:477.70px;top:114px;transform:scaleX(0.822);">NQEX</div>
<div class="t" style="left:567.40px;top:114px;transform:scaleX(0.938);">Regular</div>
<div class="t" style="left:617.70px;top:114px;">000|001|000</div>
<div class="t" style="left:5.00px;top:128px;">10:29:42</div>
<div class="t" style="left:183.00px;top:128px;">145.2400</div>
<div class="t" style="left:261.00px;top:128px;">100</div>
<div class="t" style="left:298.00px;top:128px;">145.3100</div>
<div class="t" style="left:376.00px;top:128px;">300</div>
<div class="t" style="left:424.50px;top:128px;transform:scaleX(0.817);">NYSE</div>
<div class="t" style="left:477.70px;top:128px;transform:scaleX(0.822);">NQEX</div>
<div class="t" style="left:567.40px;top:128px;transform:scaleX(0.938);">Regular</div>
<div class="t" style="left:5.00px;top:142px;">10:29:42</div>
<div class="t" style="left:183.00px;top:142px;">145.2400</div>
<div class="t" style="left:261.00px;top:142px;">100</div>
<div class="t" style="left:298.00px;top:142px;">145.3100</div>
<div class="t" style="left:376.00px;top:142px;">100</div>
<div class="t" style="left:424.50px;top:142px;transform:scaleX(0.817);">NYSE</div>
<div class="t" style="left:480.00px;top:142px;transform:scaleX(0.828);">PACF</div>
<div class="t" style="left:567.40px;top:142px;transform:scaleX(0.938);">Regular</div>
<div class="t" style="left:5.00px;top:156px;">10:29:42</div>
<div class="t" style="left:183.00px;top:156px;">145.2400</div>
<div class="t" style="left:261.00px;top:156px;">100</div>
<div class="t" style="left:298.00px;top:156px;">145.3000</div>
<div class="t" style="left:376.00px;top:156px;">100</div>
<div class="t" style="left:424.50px;top:156px;transform:scaleX(0.817);">NYSE</div>
<div class="t" style="left:477.70px;top:156px;transform:scaleX(0.822);">NQEX</div>
<div class="t" style="left:567.40px;top:156px;transform:scaleX(0.938);">Regular</div>
<div class="t" style="left:5.00px;top:170px;">10:29:42</div>
<div class="t" style="left:183.00px;top:170px;">145.2300</div>
<div class="t" style="left:261.00px;top:170px;">400</div>
<div class="t" style="left:298.00px;top:170px;">145.3000</div>
<div class="t" style="left:376.00px;top:170px;">100</div>
<div class="t" style="left:424.50px;top:170px;transform:scaleX(0.817);">NYSE</div>
<div class="t" style="left:477.70px;top:170px;transform:scaleX(0.822);">NQEX</div>
<div class="t" style="left:567.40px;top:170px;transform:scaleX(0.938);">Regular</div>
<div class="t" style="left:5.00px;top:184px;">10:29:42</div>
<div class="t" style="left:183.00px;top:184px;">145.2300</div>
<div class="t" style="left:261.00px;top:184px;">300</div>
<div class="t" style="left:298.00px;top:184px;">145.3000</div>
<div class="t" style="left:376.00px;top:184px;">100</div>
<div class="t" style="left:424.50px;top:184px;transform:scaleX(0.817);">NYSE</div>
<div class="t" style="left:477.70px;top:184px;transform:scaleX(0.822);">NQEX</div>
<div class="t" style="left:567.40px;top:184px;transform:scaleX(0.938);">Regular</div>
<div class="t" style="left:5.00px;top:198px;">10:29:42</div>
<div class="t" style="left:183.00px;top:198px;">145.2300</div>
<div class="t" style="left:261.00px;top:198px;">200</div>
<div class="t" style="left:298.00px;top:198px;">145.3000</div>
<div class="t" style="left:376.00px;top:198px;">100</div>
<div class="t" style="left:424.50px;top:198px;transform:scaleX(0.817);">NYSE</div>
<div class="t" style="left:477.70px;top:198px;transform:scaleX(0.822);">NQEX</div>
<div class="t" style="left:567.40px;top:198px;transform:scaleX(0.938);">Regular</div>
<div class="t" style="left:5.00px;top:212px;">10:29:42</div>
<div class="t" style="left:183.00px;top:212px;">145.2200</div>
<div class="t" style="left:261.00px;top:212px;">400</div>
<div class="t" style="left:298.00px;top:212px;">145.3000</div>
<div class="t" style="left:376.00px;top:212px;">100</div>
<div class="t" style="left:424.50px;top:212px;transform:scaleX(0.817);">NYSE</div>
<div class="t" style="left:477.70px;top:212px;transform:scaleX(0.822);">NQEX</div>
<div class="t" style="left:567.40px;top:212px;transform:scaleX(0.938);">Regular</div>
<div class="t" style="left:5.00px;top:226px;">10:29:42</div>
<div class="t" style="left:183.00px;top:226px;">145.2200</div>
<div class="t" style="left:261.00px;top:226px;">300</div>
<div class="t" style="left:298.00px;top:226px;">145.3000</div>
<div class="t" style="left:376.00px;top:226px;">100</div>
<div class="t" style="left:424.50px;top:226px;transform:scaleX(0.817);">NYSE</div>
<div class="t" style="left:477.70px;top:226px;transform:scaleX(0.822);">NQEX</div>
<div class="t" style="left:567.40px;top:226px;transform:scaleX(0.938);">Regular</div>
<div class="t" style="left:5.00px;top:240px;">10:29:42</div>
<div class="t" style="left:183.00px;top:240px;">145.2200</div>
<div class="t" style="left:261.00px;top:240px;">300</div>
<div class="t" style="left:298.00px;top:240px;">145.3000</div>
<div class="t" style="left:376.00px;top:240px;">200</div>
<div class="t" style="left:424.50px;top:240px;transform:scaleX(0.817);">NYSE</div>
<div class="t" style="left:477.70px;top:240px;transform:scaleX(0.822);">NQEX</div>
<div class="t" style="left:567.40px;top:240px;transform:scaleX(0.938);">Regular</div>
<div class="t" style="left:5.00px;top:254px;">10:29:42</div>
<div class="t" style="left:183.00px;top:254px;">145.2200</div>
<div class="t" style="left:261.00px;top:254px;">200</div>
<div class="t" style="left:298.00px;top:254px;">145.3000</div>
<div class="t" style="left:376.00px;top:254px;">200</div>
<div class="t" style="left:424.50px;top:254px;transform:scaleX(0.817);">NYSE</div>
<div class="t" style="left:477.70px;top:254px;transform:scaleX(0.822);">NQEX</div>
<div class="t" style="left:567.40px;top:254px;transform:scaleX(0.938);">Regular</div>
<div class="t" style="left:5.00px;top:268px;">10:29:42</div>
<div class="t" style="left:183.00px;top:268px;">145.2000</div>
<div class="t" style="left:261.00px;top:268px;">100</div>
<div class="t" style="left:298.00px;top:268px;">145.3000</div>
<div class="t" style="left:376.00px;top:268px;">400</div>
<div class="t" style="left:424.50px;top:268px;transform:scaleX(0.817);">NYSE</div>
<div class="t" style="left:479.70px;top:268px;transform:scaleX(0.868);">BATS</div>
<div class="t" style="left:567.40px;top:268px;transform:scaleX(0.938);">Regular</div>
<div class="t" style="left:5.00px;top:282px;">10:29:42</div>
<div class="t" style="left:183.00px;top:282px;">145.2500</div>
<div class="t" style="left:261.00px;top:282px;">200</div>
<div class="t" style="left:298.00px;top:282px;">145.3000</div>
<div class="t" style="left:376.00px;top:282px;">100</div>
<div class="t" style="left:424.50px;top:282px;transform:scaleX(0.817);">NYSE</div>
<div class="t" style="left:479.50px;top:282px;transform:scaleX(0.817);">NYSE</div>
<div class="t" style="left:567.40px;top:282px;transform:scaleX(0.938);">Regular</div>
<div class="t" style="left:727.40px;top:282px;transform:scaleX(0.917);">BestB</div>
<div class="t" style="left:5.00px;top:296px;">10:29:42</div>
<div class="t" style="left:73.00px;top:296px;">145.2800</div>
<div class="t" style="left:146.00px;top:296px;">300</div>
<div class="t" style="left:424.50px;top:296px;transform:scaleX(0.817);">NYSE</div>
<div class="t" style="left:479.70px;top:296px;transform:scaleX(0.868);">BATS</div>
<div class="t" style="left:567.40px;top:296px;transform:scaleX(0.938);">Regular</div>
<div class="t" style="left:617.70px;top:296px;">000|001|000</div>
<div class="t" style="left:5.00px;top:310px;">10:29:42</div>
<div class="t" style="left:73.00px;top:310px;">145.2600</div>
<div class="t" style="left:146.00px;top:310px;">100</div>
<div class="t" style="left:424.50px;top:310px;transform:scaleX(0.817);">NYSE</div>
<div class="t" style="left:479.50px;top:310px;transform:scaleX(0.817);">NYSE</div>
<div class="t" style="left:567.40px;top:310px;transform:scaleX(0.938);">Regular</div>
<div class="t" style="left:617.70px;top:310px;">000|001|000</div>
<div class="t" style="left:5.00px;top:324px;">10:29:42</div>
<div class="t" style="left:183.00px;top:324px;">145.2500</div>
<div class="t" style="left:261.00px;top:324px;">200</div>
<div class="t" style="left:298.00px;top:324px;">145.3000</div>
<div class="t" style="left:376.00px;top:324px;">500</div>
<div class="t" style="left:424.50px;top:324px;transform:scaleX(0.817);">NYSE</div>
<div class="t" style="left:479.50px;top:324px;transform:scaleX(0.817);">NYSE</div>
<div class="t" style="left:567.40px;top:324px;transform:scaleX(0.938);">Regular</div>
<div class="t" style="left:727.40px;top:324px;transform:scaleX(0.917);">BestB</div>
<div class="t" style="left:5.00px;top:338px;">10:29:42</div>
<div class="t" style="left:183.00px;top:338px;">145.2500</div>
<div class="t" style="left:261.00px;top:338px;">200</div>
<div class="t" style="left:298.00px;top:338px;">145.3000</div>
<div class="t" style="left:376.00px;top:338px;">100</div>
<div class="t" style="left:424.50px;top:338px;transform:scaleX(0.817);">NYSE</div>
<div class="t" style="left:479.50px;top:338px;transform:scaleX(0.817);">NYSE</div>
<div class="t" style="left:567.40px;top:338px;transform:scaleX(0.938);">Regular</div>
<div class="t" style="left:727.40px;top:338px;transform:scaleX(0.917);">BestB</div>
<div class="t" style="left:5.00px;top:352px;">10:29:42</div>
<div class="t" style="left:183.00px;top:352px;">145.2400</div>
<div class="t" style="left:261.00px;top:352px;">100</div>
<div class="t" style="left:298.00px;top:352px;">145.3000</div>
<div class="t" style="left:376.00px;top:352px;">100</div>
<div class="t" style="left:424.50px;top:352px;transform:scaleX(0.817);">NYSE</div>
<div class="t" style="left:479.50px;top:352px;transform:scaleX(0.817);">NYSE</div>
<div class="t" style="left:567.40px;top:352px;transform:scaleX(0.938);">Regular</div>
<div class="t" style="left:5.00px;top:366px;">10:29:42</div>
<div class="t" style="left:183.00px;top:366px;">145.2400</div>
<div class="t" style="left:261.00px;top:366px;">100</div>
<div class="t" style="left:298.00px;top:366px;">145.3100</div>
<div class="t" style="left:376.00px;top:366px;">100</div>
<div class="t" style="left:424.50px;top:366px;transform:scaleX(0.817);">NYSE</div>
<div class="t" style="left:479.50px;top:366px;transform:scaleX(0.817);">NYSE</div>
<div class="t" style="left:567.40px;top:366px;transform:scaleX(0.938);">Regular</div>
<div class="t" style="left:5.00px;top:380px;">10:29:42</div>
<div class="t" style="left:183.00px;top:380px;">145.2200</div>
<div class="t" style="left:261.00px;top:380px;">200</div>
<div class="t" style="left:298.00px;top:380px;">145.2900</div>
<div class="t" style="left:376.00px;top:380px;">100</div>
<div class="t" style="left:424.50px;top:380px;transform:scaleX(0.817);">NYSE</div>
<div class="t" style="left:477.70px;top:380px;transform:scaleX(0.822);">NQEX</div>
<div class="t" style="left:567.40px;top:380px;transform:scaleX(0.938);">Regular</div>
<div class="t" style="left:5.00px;top:394px;">10:29:42</div>
<div class="t" style="left:183.00px;top:394px;">145.2400</div>
<div class="t" style="left:261.00px;top:394px;">100</div>
<div class="t" style="left:298.00px;top:394px;">145.2900</div>
<div class="t" style="left:376.00px;top:394px;">100</div>
<div class="t" style="left:424.50px;top:394px;transform:scaleX(0.817);">NYSE</div>
<div class="t" style="left:479.50px;top:394px;transform:scaleX(0.817);">NYSE</div>
<div class="t" style="left:567.40px;top:394px;transform:scaleX(0.938);">Regular</div>
<div class="t" style="left:5.00px;top:408px;">10:29:42</div>
<div class="t" style="left:183.00px;top:408px;">145.2400</div>
<div class="t" style="left:261.00px;top:408px;">100</div>
<div class="t" style="left:298.00px;top:408px;">145.3000</div>
<div class="t" style="left:376.00px;top:408px;">100</div>
<div class="t" style="left:424.50px;top:408px;transform:scaleX(0.817);">NYSE</div>
<div class="t" style="left:480.00px;top:408px;transform:scaleX(0.828);">PACF</div>
<div class="t" style="left:567.40px;top:408px;transform:scaleX(0.938);">Regular</div>
<div class="t" style="left:727.40px;top:408px;transform:scaleX(0.917);">BestB</div>
<div class="t" style="left:5.00px;top:422px;">10:29:42</div>
<div class="t" style="left:183.00px;top:422px;">145.2000</div>
<div class="t" style="left:261.00px;top:422px;">100</div>
<div class="t" style="left:298.00px;top:422px;">145.3000</div>
<div class="t" style="left:376.00px;top:422px;">300</div>
<div class="t" style="left:424.50px;top:422px;transform:scaleX(0.817);">NYSE</div>
<div class="t" style="left:479.70px;top:422px;transform:scaleX(0.868);">BATS</div>
<div class="t" style="left:567.40px;top:422px;transform:scaleX(0.938);">Regular</div>
<div class="t" style="left:5.00px;top:436px;">10:29:42</div>
<div class="t" style="left:183.00px;top:436px;">145.2000</div>
<div class="t" style="left:261.00px;top:436px;">200</div>
<div class="t" style="left:298.00px;top:436px;">145.3000</div>
<div class="t" style="left:376.00px;top:436px;">300</div>
<div class="t" style="left:424.50px;top:436px;transform:scaleX(0.817);">NYSE</div>
<div class="t" style="left:479.70px;top:436px;transform:scaleX(0.868);">BATS</div>
<div class="t" style="left:567.40px;top:436px;transform:scaleX(0.938);">Regular</div>
<div class="t" style="left:5.00px;top:450px;">10:29:42</div>
<div class="t" style="left:183.00px;top:450px;">145.2000</div>
<div class="t" style="left:261.00px;top:450px;">100</div>
<div class="t" style="left:298.00px;top:450px;">145.3000</div>
<div class="t" style="left:376.00px;top:450px;">300</div>
<div class="t" style="left:424.50px;top:450px;transform:scaleX(0.817);">NYSE</div>
<div class="t" style="left:479.70px;top:450px;transform:scaleX(0.868);">BATS</div>
<div class="t" style="left:567.40px;top:450px;transform:scaleX(0.938);">Regular</div>
<div class="t" style="left:5.00px;top:464px;">10:29:42</div>
<div class="t" style="left:183.00px;top:464px;">144.2100</div>
<div class="t" style="left:261.00px;top:464px;">600</div>
<div class="t" style="left:298.00px;top:464px;">145.2900</div>
<div class="t" style="left:376.00px;top:464px;">100</div>
<div class="t" style="left:424.50px;top:464px;transform:scaleX(0.817);">NYSE</div>
<div class="t" style="left:479.50px;top:464px;transform:scaleX(0.790);">EDGE</div>
<div class="t" style="left:567.40px;top:464px;transform:scaleX(0.938);">Regular</div>
<div class="t" style="left:5.00px;top:478px;">10:29:42</div>
<div class="t" style="left:183.00px;top:478px;">145.1900</div>
<div class="t" style="left:261.00px;top:478px;">100</div>
<div class="t" style="left:298.00px;top:478px;">145.3000</div>
<div class="t" style="left:376.00px;top:478px;">300</div>
<div class="t" style="left:424.50px;top:478px;transform:scaleX(0.817);">NYSE</div>
<div class="t" style="left:479.70px;top:478px;transform:scaleX(0.868);">BATS</div>
<div class="t" style="left:567.40px;top:478px;transform:scaleX(0.938);">Regular</div>
<div class="t" style="left:5.00px;top:492px;">10:29:42</div>
<div class="t" style="left:183.00px;top:492px;">145.2200</div>
<div class="t" style="left:261.00px;top:492px;">300</div>
<div class="t" style="left:298.00px;top:492px;">145.2900</div>
<div class="t" style="left:376.00px;top:492px;">100</div>
<div class="t" style="left:424.50px;top:492px;transform:scaleX(0.817);">NYSE</div>
<div class="t" style="left:477.70px;top:492px;transform:scaleX(0.822);">NQEX</div>
<div class="t" style="left:567.40px;top:492px;transform:scaleX(0.938);">Regular</div>
<div class="t" style="left:5.00px;top:506px;">10:29:42</div>
<div class="t" style="left:183.00px;top:506px;">145.2000</div>
<div class="t" style="left:261.00px;top:506px;">300</div>
<div class="t" style="left:298.00px;top:506px;">145.3800</div>
<div class="t" style="left:376.00px;top:506px;">100</div>
<div class="t" style="left:424.50px;top:506px;transform:scaleX(0.817);">NYSE</div>
<div class="t" style="left:478.50px;top:506px;transform:scaleX(0.797);">EDGX</div>
<div class="t" style="left:567.40px;top:506px;transform:scaleX(0.938);">Regular</div>
<div class="t" style="left:5.00px;top:520px;">10:29:42</div>
<div class="t" style="left:183.00px;top:520px;">145.2200</div>
<div class="t" style="left:261.00px;top:520px;">200</div>
<div class="t" style="left:298.00px;top:520px;">145.2900</div>
<div class="t" style="left:376.00px;top:520px;">100</div>
<div class="t" style="left:424.50px;top:520px;transform:scaleX(0.817);">NYSE</div>
<div class="t" style="left:477.70px;top:520px;transform:scaleX(0.822);">NQEX</div>
<div class="t" style="left:567.40px;top:520px;transform:scaleX(0.938);">Regular</div>
<div class="t" style="left:5.00px;top:534px;">10:29:42</div>
<div class="t" style="left:183.00px;top:534px;">145.2400</div>
<div class="t" style="left:261.00px;top:534px;">100</div>
<div class="t" style="left:298.00px;top:534px;">145.2900</div>
<div class="t" style="left:376.00px;top:534px;">100</div>
<div class="t" style="left:424.50px;top:534px;transform:scaleX(0.817);">NYSE</div>
<div class="t" style="left:480.00px;top:534px;transform:scaleX(0.828);">PACF</div>
<div class="t" style="left:567.40px;top:534px;transform:scaleX(0.938);">Regular</div>
<div class="t" style="left:727.40px;top:534px;transform:scaleX(0.917);">BestB</div>
<div class="t" style="left:5.00px;top:548px;">10:29:42</div>
<div class="t" style="left:183.00px;top:548px;">145.2300</div>
<div class="t" style="left:261.00px;top:548px;">100</div>
<div class="t" style="left:298.00px;top:548px;">145.2900</div>
<div class="t" style="left:376.00px;top:548px;">100</div>
<div class="t" style="left:424.50px;top:548px;transform:scaleX(0.817);">NYSE</div>
<div class="t" style="left:479.50px;top:548px;transform:scaleX(0.817);">NYSE</div>
<div class="t" style="left:567.40px;top:548px;transform:scaleX(0.938);">Regular</div>
<div class="t" style="left:5.00px;top:562px;">10:29:42</div>
<div class="t" style="left:183.00px;top:562px;">145.2600</div>
<div class="t" style="left:261.00px;top:562px;">100</div>
<div class="t" style="left:298.00px;top:562px;">145.2900</div>
<div class="t" style="left:376.00px;top:562px;">100</div>
<div class="t" style="left:424.50px;top:562px;transform:scaleX(0.817);">NYSE</div>
<div class="t" style="left:479.50px;top:562px;transform:scaleX(0.817);">NYSE</div>
<div class="t" style="left:567.40px;top:562px;transform:scaleX(0.938);">Regular</div>
<div class="t" style="left:727.40px;top:562px;transform:scaleX(0.917);">BestB</div>
</div>
<div style="left:774px;top:189px;width:18px;height:585px;background:#f5f4ee;"></div>
<div style="left:775px;top:190px;width:16px;height:17px;border-radius:2px;background:#a9c0f4"></div>
<div style="left:775px;top:190px;width:15px;height:16px;border:1px solid #fff;border-radius:2px;background:linear-gradient(135deg,#dde7fe,#c2d4fb 60%,#b6cbf8)"></div>
<svg style="position:absolute;left:775px;top:190px" width="16" height="17"><path d="M3.5 10.5L8 6L12.5 10.5" fill="none" stroke="#4d6185" stroke-width="2.2"/></svg>
<div style="left:775px;top:756px;width:16px;height:17px;border-radius:2px;background:#a9c0f4"></div>
<div style="left:775px;top:756px;width:15px;height:16px;border:1px solid #fff;border-radius:2px;background:linear-gradient(135deg,#dde7fe,#c2d4fb 60%,#b6cbf8)"></div>
<svg style="position:absolute;left:775px;top:756px" width="16" height="17"><path d="M3.5 6L8 10.5L12.5 6" fill="none" stroke="#4d6185" stroke-width="2.2"/></svg>
<div style="left:775px;top:528px;width:16px;height:40px;border-radius:2px;background:#a9c0f4"></div>
<div style="left:775px;top:528px;width:15px;height:39px;border:1px solid #fff;border-radius:2px;background:linear-gradient(90deg,#c9d8fc,#bfd1fb 60%,#b8ccf8)"></div>
<div style="left:779px;top:543px;width:8px;height:1px;background:#eef3fe;"></div>
<div style="left:780px;top:544px;width:8px;height:1px;background:#8cabf0;"></div>
<div style="left:779px;top:545px;width:8px;height:1px;background:#eef3fe;"></div>
<div style="left:780px;top:546px;width:8px;height:1px;background:#8cabf0;"></div>
<div style="left:779px;top:547px;width:8px;height:1px;background:#eef3fe;"></div>
<div style="left:780px;top:548px;width:8px;height:1px;background:#8cabf0;"></div>
<div style="left:779px;top:549px;width:8px;height:1px;background:#eef3fe;"></div>
<div style="left:780px;top:550px;width:8px;height:1px;background:#8cabf0;"></div>
<div class="t" style="left:6.00px;top:782px;transform:scaleX(0.922);">Ready</div>
<div style="left:688px;top:780px;width:26px;height:16px;border-top:1px solid #aca899;border-left:1px solid #aca899;border-right:1px solid #ffffff;border-bottom:1px solid #ffffff"></div>
<div style="left:716px;top:780px;width:28px;height:16px;border-top:1px solid #aca899;border-left:1px solid #aca899;border-right:1px solid #ffffff;border-bottom:1px solid #ffffff"></div>
<div style="left:746px;top:780px;width:31px;height:16px;border-top:1px solid #aca899;border-left:1px solid #aca899;border-right:1px solid #ffffff;border-bottom:1px solid #ffffff"></div>
<div class="t" style="left:690.00px;top:782px;transform:scaleX(0.839);">CAP</div>
<svg style="position:absolute;left:776px;top:776px" width="24" height="24" shape-rendering="crispEdges"><path fill="#ffffff" d="M7 18h1v1h-1zM8 17h1v1h-1zM9 16h1v1h-1zM10 15h1v1h-1zM11 14h1v1h-1zM12 13h1v1h-1zM13 12h1v1h-1zM14 11h1v1h-1zM15 10h1v1h-1zM16 9h1v1h-1zM17 8h1v1h-1zM18 7h1v1h-1zM11 18h1v1h-1zM12 17h1v1h-1zM13 16h1v1h-1zM14 15h1v1h-1zM15 14h1v1h-1zM16 13h1v1h-1zM17 12h1v1h-1zM18 11h1v1h-1zM15 18h1v1h-1zM16 17h1v1h-1zM17 16h1v1h-1zM18 15h1v1h-1z"/><path fill="#aca899" d="M8 18h1v1h-1zM9 17h1v1h-1zM10 16h1v1h-1zM11 15h1v1h-1zM12 14h1v1h-1zM13 13h1v1h-1zM14 12h1v1h-1zM15 11h1v1h-1zM16 10h1v1h-1zM17 9h1v1h-1zM18 8h1v1h-1zM9 18h1v1h-1zM10 17h1v1h-1zM11 16h1v1h-1zM12 15h1v1h-1zM13 14h1v1h-1zM14 13h1v1h-1zM15 12h1v1h-1zM16 11h1v1h-1zM17 10h1v1h-1zM18 9h1v1h-1zM12 18h1v1h-1zM13 17h1v1h-1zM14 16h1v1h-1zM15 15h1v1h-1zM16 14h1v1h-1zM17 13h1v1h-1zM18 12h1v1h-1zM13 18h1v1h-1zM14 17h1v1h-1zM15 16h1v1h-1zM16 15h1v1h-1zM17 14h1v1h-1zM18 13h1v1h-1zM16 18h1v1h-1zM17 17h1v1h-1zM18 16h1v1h-1zM17 18h1v1h-1zM18 17h1v1h-1z"/></svg>
</body></html>
